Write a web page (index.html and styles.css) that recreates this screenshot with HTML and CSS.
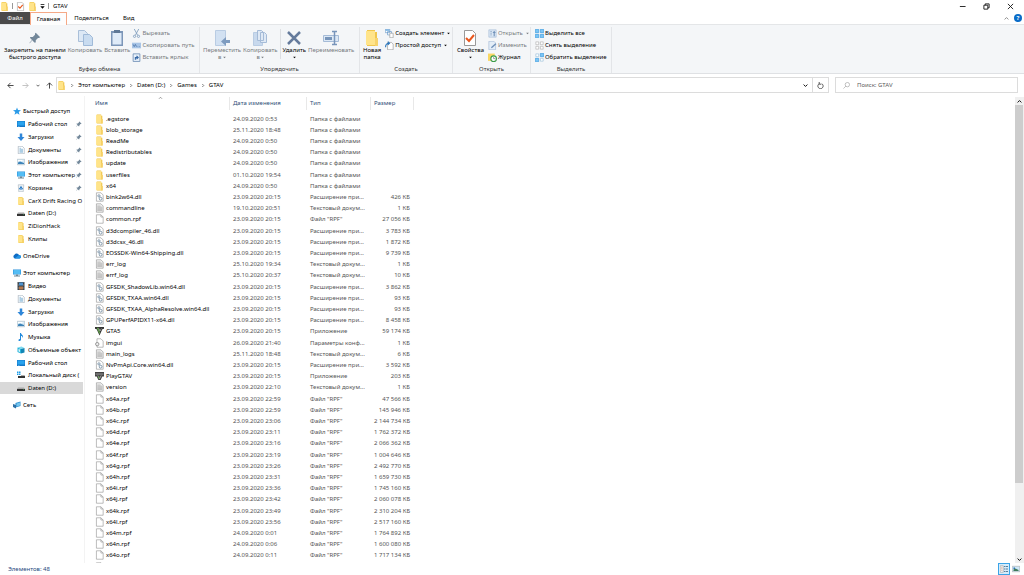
FILE: index.html
```html
<!DOCTYPE html>
<html lang="ru">
<head>
<meta charset="utf-8">
<title>GTAV</title>
<link rel="stylesheet" href="styles.css">
</head>
<body>
<svg class="sprite" aria-hidden="true">
  <symbol id="folder" viewBox="0 0 16 16"><path fill="#f0c64d" d="M3 0h8v2h2v14H3z"/><path fill="#ffe48a" d="M2 1h9v14H2z"/><path fill="#f7d36b" d="M11 8h3v8h-3z"/></symbol>
  <symbol id="file" viewBox="0 0 16 16"><path fill="#fff" stroke="#8a8a8a" d="M2.500.5h8l4 4v11h-12z"/><path fill="none" stroke="#8a8a8a" d="M10.500.5v4h4"/></symbol>
  <symbol id="text" viewBox="0 0 16 16"><path fill="#f1f1f1" stroke="#8a8a8a" d="M2.500.5h8l4 4v11h-12z"/><path stroke="#999" d="M4 4.500h6M4 6.500h9M4 8.500h9M4 10.500h9M4 12.500h9"/></symbol>
  <symbol id="dll" viewBox="0 0 16 16"><path fill="#fff" stroke="#8a8a8a" d="M2.500.5h8l4 4v11h-12z"/><circle cx="7" cy="6" r="2" fill="none" stroke="#6f8aa0" stroke-width="1.500"/><circle cx="10" cy="11" r="2.500" fill="none" stroke="#6f8aa0" stroke-width="1.500"/></symbol>
  <symbol id="config" viewBox="0 0 16 16"><path fill="#fff" stroke="#8a8a8a" d="M3.500.5h7l4 4v11h-11z"/><circle cx="4" cy="10" r="3" fill="#eee" stroke="#888" stroke-width="1.500"/></symbol>
  <symbol id="gta" viewBox="0 0 16 16"><path fill="#333" d="M0 1h16v3l-3 1-5 11L3 5 0 4z"/><path fill="#5f9c4a" d="M3 2h3l3 8-1 4z"/><path stroke="#ddd" d="M7 3l2 5 2-5"/></symbol>
  <symbol id="play" viewBox="0 0 16 16"><path fill="#444" d="M0 1h16v8h-3l-3 6H6L3 9H0z"/><path stroke="#ddd" fill="none" d="M1 4.500h14M5 7l3 6 3-6"/><path fill="#5f9c4a" d="M5 9h3l-1 5z"/></symbol>
  <symbol id="star" viewBox="0 0 16 16"><path fill="#2b9be8" d="M8 1l2 5 6 .3-4.500 3.700L13 15.500 8 12.500 3 15.500 4.500 10 0 6.300 6 6z"/></symbol>
  <symbol id="desktop" viewBox="0 0 16 16"><path fill="#1478c8" d="M0 2h16v12H0z"/><path fill="#29a3ee" d="M1 3h14v8H1z"/><path fill="#8cd3fa" d="M2 12h3v1H2z"/></symbol>
  <symbol id="down" viewBox="0 0 16 16"><path fill="#2e86d8" d="M5.500 1h5v7H15l-7 8-7-8h4.500z"/></symbol>
  <symbol id="docs" viewBox="0 0 16 16"><path fill="#fff" stroke="#8195a5" d="M2.500.5h8l4 4v11h-12z"/><path fill="none" stroke="#4a90c4" d="M5 6.500h7M5 8.500h7M5 10.500h7M5 12.500h7M5 4.500h3"/></symbol>
  <symbol id="images" viewBox="0 0 16 16"><path fill="#d8ecf8" stroke="#9aaab5" d="M.5 2.500h15v11H.5z"/><path fill="#3d83b8" d="M2 9l4-2 8 3v2H2z"/><path fill="#fff" d="M2 4h9v2H2z"/></symbol>
  <symbol id="pc" viewBox="0 0 16 16"><path fill="#2b90d8" d="M0 1h16v10H0z"/><path fill="#54bdf4" d="M1 2h14v8H1z"/><path fill="#6d8796" d="M6 11h4v2h4v2H2v-2h4z"/></symbol>
  <symbol id="bin" viewBox="0 0 16 16"><path fill="#eef3f6" stroke="#98a6b0" d="M2.500 1.500h11l-1 14h-9z"/><path fill="none" stroke="#1b73c4" stroke-width="2" d="M8 5l3 5H5z"/></symbol>
  <symbol id="drive" viewBox="0 0 16 16"><path fill="#aaa" d="M2 7h12l2 3H0z"/><path fill="#333" d="M0 10h16v4H0z"/><path fill="#3db85f" d="M12 11h2v1h-2z"/></symbol>
  <symbol id="sysdrive" viewBox="0 0 16 16"><path fill="#1a9be8" d="M0 1h3v3H0zM4 1h3v3H4zM0 5h3v3H0zM4 5h3v3H4z"/><path fill="#333" d="M2 10h14v4H2z"/><path fill="#aaa" d="M8 8h7l1 2H8z"/></symbol>
  <symbol id="cloud" viewBox="0 0 16 16"><path fill="#0f6cc4" d="M4 13a4 4 0 0 1-1-7.500A5 5 0 0 1 12 6a3.500 3.500 0 0 1 1 7z"/><path fill="#2596e6" d="M3 13l9-7a3.500 3.500 0 0 1 1 7z"/></symbol>
  <symbol id="video" viewBox="0 0 16 16"><path fill="#3b4248" d="M1 0h14v16H1z"/><path fill="#4e93cf" d="M4 1h8v6H4z"/><path fill="#b4764a" d="M4 9h8v6H4z"/><path stroke="#ddd" stroke-dasharray="1 2" d="M2.500 1v14M13.500 1v14"/></symbol>
  <symbol id="music" viewBox="0 0 16 16"><path fill="#2089dc" d="M6 0h2c0 3 5 4 4 9h-1c0-2-1-3-3-3v7c0 4-6 4-5 1 0-2 2-2 3-2z"/></symbol>
  <symbol id="cube" viewBox="0 0 16 16"><path fill="#7ddcf2" d="M1 3l8-2 6 3-7 2z"/><path fill="#27b3da" d="M1 3l7 3v9l-7-3z"/><path fill="#1286b5" d="M8 6l7-2v9l-7 2z"/><path fill="#d8f6fb" d="M3 6l3 1v5l-3-1z"/></symbol>
  <symbol id="network" viewBox="0 0 16 16"><path fill="#2f8fd0" d="M5 4l10-3v9L5 13z"/><path fill="#75c5ee" d="M7 5l7-2v6l-7 2z"/><path fill="#2c6fa5" d="M0 6l6 2v7l-6-3z"/></symbol>
  <symbol id="pin" viewBox="0 0 16 16"><path fill="#73889a" d="M9 1l6 6-2 1-1 0-3 3 0 3-2 0-2.500-3L1 15l-.5-.5L4 10.500 1.500 8l0-1.500 3.500 0 3-3V2z"/></symbol>
  <symbol id="copy" viewBox="0 0 16 16"><path fill="#dce8f5" stroke="#a9bfd9" d="M1.500.5h6l3 3v8h-9z"/><path fill="#c9dcf0" stroke="#a0bad8" d="M6.500 4.500h6l3 3v8h-9z"/></symbol>
  <symbol id="paste" viewBox="0 0 16 16"><path fill="#7c96b8" d="M2 1h12v15H2z"/><path fill="#dfebf8" d="M3.500 3h9v11.500h-9z"/><path fill="#5f7896" d="M5 0h6v3H5z"/></symbol>
  <symbol id="cut" viewBox="0 0 16 16"><path fill="none" stroke="#7f9dbc" stroke-width="1.500" d="M4 0l6 11M12 0L6 11"/><circle cx="4.500" cy="13" r="2" fill="none" stroke="#7f9dbc" stroke-width="1.500"/><circle cx="11.500" cy="13" r="2" fill="none" stroke="#7f9dbc" stroke-width="1.500"/></symbol>
  <symbol id="path" viewBox="0 0 16 16"><path fill="#a9c5e6" d="M0 3h16v10H0z"/><path stroke="#4f79ac" stroke-width="1.500" fill="none" d="M2 6l2 4 2-4 2 4M10 10h1M13 10h1"/></symbol>
  <symbol id="shortcut" viewBox="0 0 16 16"><path fill="#e8f1fa" stroke="#6f90b5" stroke-width="1.500" d="M2 1.500h12v13.500H2z"/><path fill="none" stroke="#3568a5" stroke-width="2" d="M6 12V8h4M8 5l3 3-3 3"/></symbol>
  <symbol id="move" viewBox="0 0 16 16"><path fill="#d2e1f2" stroke="#b9cce3" d="M1.500.5h10v15h-10z"/><path fill="#7f9cc0" d="M16 10v3h-4v3l-5-4.500L12 7v3z"/></symbol>
  <symbol id="copyto" viewBox="0 0 16 16"><path fill="#c8d9ed" stroke="#b9cce3" d="M1.500 2.500h9v13h-9z"/><path fill="#dfe9f5" stroke="#a5bbd7" d="M5.500.5h4l2 2v8h-6zM8.500 2.500h4l2 2v8h-6z"/></symbol>
  <symbol id="delete" viewBox="0 0 16 16"><path stroke="#657b9c" stroke-width="2.500" d="M2 2l12 12M14 2L2 14"/></symbol>
  <symbol id="rename" viewBox="0 0 16 16"><path fill="#dce8f5" stroke="#a5bbd7" d="M.5 5.500h15v6H.5z"/><path fill="#7895ba" d="M2 7h7v3H2z"/><path fill="none" stroke="#7895ba" stroke-width="1.500" d="M9 1.500h5M11.500 1.500v13M9 14.500h5"/></symbol>
  <symbol id="newitem" viewBox="0 0 16 16"><path fill="#fff" stroke="#4e88be" d="M.5.5h8v6h-8zM4.500 4.500h7v6h-7z"/><path fill="#fff" stroke="#888" d="M8.500 7.500h6v8h-6z"/><path fill="#5da4dc" d="M1 1h7v2H1z"/></symbol>
  <symbol id="easy" viewBox="0 0 16 16"><path fill="#fff" stroke="#888" d="M4.500 2.500h7l3 3v10h-10z"/><path fill="none" stroke="#2c77bd" stroke-width="2" d="M1 11c0-5 2-7 6-7M5 1l3 3-3 3"/></symbol>
  <symbol id="props" viewBox="0 0 16 16"><path fill="#fff" stroke="#999" d="M2.500.5h8l3 3v12h-11z"/><path fill="none" stroke="#e8571e" stroke-width="2" d="M4 8l3 3 5-6"/></symbol>
  <symbol id="open" viewBox="0 0 16 16"><path fill="#dce8f5" stroke="#98b1d0" d="M1.500 1.500h13v13h-13z"/><path stroke="#6f90b8" d="M4 4.500h3M4 7.500h3M4 10.500h3"/><path fill="#6f90b8" d="M11 3l3 4h-2v6h-2V7H8z"/></symbol>
  <symbol id="edit" viewBox="0 0 16 16"><path fill="#e4eef8" stroke="#98b1d0" d="M1.500.5h9l3 3v12h-12z"/><path stroke="#6f90b8" stroke-width="2.500" d="M6 12l8-7"/></symbol>
  <symbol id="history" viewBox="0 0 16 16"><path fill="#f8d763" d="M0 1h12v13H0z"/><circle cx="10" cy="10" r="5" fill="#fff" stroke="#3b9b4a" stroke-width="2"/><path fill="none" stroke="#555" d="M10 7v3h3"/></symbol>
  <symbol id="selall" viewBox="0 0 16 16"><path fill="#7cc5f4" stroke="#2c92dc" d="M.5.5h6v6h-6zM9.500.5h6v6h-6zM.5 9.500h6v6h-6zM9.500 9.500h6v6h-6z"/></symbol>
  <symbol id="selnone" viewBox="0 0 16 16"><path fill="#fff" stroke="#a5a5a5" d="M1.500 1.500h5v5h-5zM9.500 1.500h5v5h-5zM1.500 9.500h5v5h-5zM9.500 9.500h5v5h-5z"/></symbol>
  <symbol id="selinv" viewBox="0 0 16 16"><path fill="#7cc5f4" stroke="#2c92dc" d="M9.500.5h6v6h-6zM.5 9.500h6v6h-6z"/><path fill="#fff" stroke="#8ab5d5" d="M1.500 1.500h5v5h-5zM9.500 9.500h5v5h-5z"/></symbol>
  <symbol id="left" viewBox="0 0 16 16"><path fill="none" stroke="currentColor" stroke-width="2" d="M15 8H2M8 2L2 8l6 6"/></symbol>
  <symbol id="right" viewBox="0 0 16 16"><path fill="none" stroke="currentColor" stroke-width="2" d="M1 8h13M8 2l6 6-6 6"/></symbol>
  <symbol id="up" viewBox="0 0 16 16"><path fill="none" stroke="currentColor" stroke-width="2" d="M8 15V2M2 8l6-6 6 6"/></symbol>
  <symbol id="chev" viewBox="0 0 16 16"><path fill="none" stroke="currentColor" stroke-width="3" d="M2 5l6 6 6-6"/></symbol>
  <symbol id="chevup" viewBox="0 0 16 16"><path fill="none" stroke="currentColor" stroke-width="3" d="M2 11l6-6 6 6"/></symbol>
  <symbol id="sep" viewBox="0 0 16 16"><path fill="none" stroke="currentColor" stroke-width="3" d="M5 2l6 6-6 6"/></symbol>
  <symbol id="tri" viewBox="0 0 16 16"><path fill="currentColor" d="M1 4h14l-7 8z"/></symbol>
</svg>

<header class="titlebar">
  <svg class="icon"><use href="#folder"/></svg>
  <span class="bar"></span>
  <button class="plain" aria-label="Свойства"><svg class="icon"><use href="#props"/></svg></button>
  <button class="plain" aria-label="Новая папка"><svg class="icon"><use href="#folder"/></svg></button>
  <button class="plain" aria-label="Настройка панели"><svg class="micro" viewBox="0 0 16 16"><path d="M2 1h12v2H2zM1 7h14l-7 8z"/></svg></button>
  <span class="bar"></span>
  <h1>GTAV</h1>
  <div class="window-buttons">
    <button class="plain" aria-label="Свернуть"><svg viewBox="0 0 16 16"><path d="M2 8h13" /></svg></button>
    <button class="plain" aria-label="Восстановить"><svg viewBox="0 0 16 16"><path d="M2 5h9v9H2zM5 5V2h9v9h-3"/></svg></button>
    <button class="plain" aria-label="Закрыть"><svg viewBox="0 0 16 16"><path d="M2 2l12 12M14 2L2 14"/></svg></button>
  </div>
</header>

<nav class="tabs">
  <button class="tab tab-file">Файл</button>
  <button class="tab tab-active">Главная</button>
  <button class="tab tab-share">Поделиться</button>
  <button class="tab">Вид</button>
  <div class="tabs-end">
    <button class="plain" aria-label="Свернуть ленту"><svg class="micro"><use href="#chevup"/></svg></button>
    <button class="help" aria-label="Справка">?</button>
  </div>
</nav>

<section class="ribbon">
  <div class="group group-clipboard">
    <div class="tools">
      <button class="big"><svg class="pin-large"><use href="#pin"/></svg><span>Закрепить на панели<br>быстрого доступа</span></button>
      <button class="big off"><svg><use href="#copy"/></svg><span>Копировать</span></button>
      <button class="big off"><svg><use href="#paste"/></svg><span>Вставить</span></button>
      <div class="stack">
        <button class="small off"><svg><use href="#cut"/></svg>Вырезать</button>
        <button class="small off"><svg><use href="#path"/></svg>Скопировать путь</button>
        <button class="small off"><svg><use href="#shortcut"/></svg>Вставить ярлык</button>
      </div>
    </div>
    <h2>Буфер обмена</h2>
  </div>
  <div class="group group-organize">
    <div class="tools">
      <button class="big off"><svg><use href="#move"/></svg><span>Переместить<br>в <svg class="drop"><use href="#tri"/></svg></span></button>
      <button class="big off"><svg><use href="#copyto"/></svg><span>Копировать<br>в <svg class="drop"><use href="#tri"/></svg></span></button>
      <span class="divider"></span>
      <button class="big"><svg><use href="#delete"/></svg><span>Удалить<br><svg class="drop"><use href="#tri"/></svg></span></button>
      <button class="big off"><svg><use href="#rename"/></svg><span>Переименовать</span></button>
    </div>
    <h2>Упорядочить</h2>
  </div>
  <div class="group group-new">
    <div class="tools">
      <button class="big"><svg><use href="#folder"/></svg><span>Новая<br>папка</span></button>
      <div class="stack">
        <button class="small"><svg><use href="#newitem"/></svg>Создать элемент <svg class="drop"><use href="#tri"/></svg></button>
        <button class="small"><svg><use href="#easy"/></svg>Простой доступ <svg class="drop"><use href="#tri"/></svg></button>
      </div>
    </div>
    <h2>Создать</h2>
  </div>
  <div class="group group-open">
    <div class="tools">
      <button class="big"><svg><use href="#props"/></svg><span>Свойства<br><svg class="drop"><use href="#tri"/></svg></span></button>
      <div class="stack">
        <button class="small off"><svg><use href="#open"/></svg>Открыть <svg class="drop"><use href="#tri"/></svg></button>
        <button class="small off"><svg><use href="#edit"/></svg>Изменить</button>
        <button class="small"><svg><use href="#history"/></svg>Журнал</button>
      </div>
    </div>
    <h2>Открыть</h2>
  </div>
  <div class="group group-select">
    <div class="tools">
      <div class="stack">
        <button class="small"><svg><use href="#selall"/></svg>Выделить все</button>
        <button class="small"><svg><use href="#selnone"/></svg>Снять выделение</button>
        <button class="small"><svg><use href="#selinv"/></svg>Обратить выделение</button>
      </div>
    </div>
    <h2>Выделить</h2>
  </div>
</section>

<section class="location">
  <div class="history">
    <button class="plain" aria-label="Назад"><svg><use href="#left"/></svg></button>
    <button class="plain faint" aria-label="Вперед"><svg><use href="#right"/></svg></button>
    <button class="plain" aria-label="Последние расположения"><svg class="micro"><use href="#chev"/></svg></button>
    <button class="plain" aria-label="Вверх"><svg><use href="#up"/></svg></button>
  </div>
  <div class="address">
    <svg class="icon"><use href="#folder"/></svg>
    <svg class="micro"><use href="#sep"/></svg>
    <a href="#">Этот компьютер</a>
    <svg class="micro"><use href="#sep"/></svg>
    <a href="#">Daten (D:)</a>
    <svg class="micro"><use href="#sep"/></svg>
    <a href="#">Games</a>
    <svg class="micro"><use href="#sep"/></svg>
    <a href="#">GTAV</a>
    <button class="plain address-drop" aria-label="Предыдущие расположения"><svg class="micro"><use href="#chev"/></svg></button>
    <button class="refresh" aria-label="Обновить"><svg viewBox="0 0 16 16"><path d="M11 4a6 6 0 1 1-6 0M5 0v5h5"/></svg></button>
  </div>
  <label class="search">
    <svg viewBox="0 0 16 16"><circle cx="10" cy="6" r="5"/><path d="M6.500 9.500L1 15"/></svg>
    <input type="search" placeholder="Поиск: GTAV" aria-label="Поиск: GTAV">
  </label>
</section>

<main class="main">
  <nav class="side">
    <ul>
      <li><a href="#" class="root"><svg><use href="#star"/></svg><span>Быстрый доступ</span></a></li>
      <li><a href="#"><svg><use href="#desktop"/></svg><span>Рабочий стол</span><svg class="pinned"><use href="#pin"/></svg></a></li>
      <li><a href="#"><svg><use href="#down"/></svg><span>Загрузки</span><svg class="pinned"><use href="#pin"/></svg></a></li>
      <li><a href="#"><svg><use href="#docs"/></svg><span>Документы</span><svg class="pinned"><use href="#pin"/></svg></a></li>
      <li><a href="#"><svg><use href="#images"/></svg><span>Изображения</span><svg class="pinned"><use href="#pin"/></svg></a></li>
      <li><a href="#"><svg><use href="#pc"/></svg><span>Этот компьютер</span><svg class="pinned"><use href="#pin"/></svg></a></li>
      <li><a href="#"><svg><use href="#bin"/></svg><span>Корзина</span><svg class="pinned"><use href="#pin"/></svg></a></li>
      <li><a href="#"><svg><use href="#folder"/></svg><span>CarX Drift Racing O</span></a></li>
      <li><a href="#"><svg><use href="#drive"/></svg><span>Daten (D:)</span></a></li>
      <li><a href="#"><svg><use href="#folder"/></svg><span>ZiDionHack</span></a></li>
      <li><a href="#"><svg><use href="#folder"/></svg><span>Клипы</span></a></li>
    </ul>
    <ul>
      <li><a href="#" class="root"><svg><use href="#cloud"/></svg><span>OneDrive</span></a></li>
    </ul>
    <ul>
      <li><a href="#" class="root"><svg><use href="#pc"/></svg><span>Этот компьютер</span></a></li>
      <li><a href="#"><svg><use href="#video"/></svg><span>Видео</span></a></li>
      <li><a href="#"><svg><use href="#docs"/></svg><span>Документы</span></a></li>
      <li><a href="#"><svg><use href="#down"/></svg><span>Загрузки</span></a></li>
      <li><a href="#"><svg><use href="#images"/></svg><span>Изображения</span></a></li>
      <li><a href="#"><svg><use href="#music"/></svg><span>Музыка</span></a></li>
      <li><a href="#"><svg><use href="#cube"/></svg><span>Объемные объект</span></a></li>
      <li><a href="#"><svg><use href="#desktop"/></svg><span>Рабочий стол</span></a></li>
      <li><a href="#"><svg><use href="#sysdrive"/></svg><span>Локальный диск (</span></a></li>
      <li><a href="#" class="current"><svg><use href="#drive"/></svg><span>Daten (D:)</span></a></li>
    </ul>
    <ul>
      <li><a href="#" class="root"><svg><use href="#network"/></svg><span>Сеть</span></a></li>
    </ul>
  </nav>

  <div class="files">
    <table>
      <colgroup><col class="col-name"><col class="col-date"><col class="col-type"><col class="col-size"></colgroup>
      <thead><tr><th>Имя<svg class="sort"><use href="#chevup"/></svg></th><th>Дата изменения</th><th>Тип</th><th>Размер</th></tr></thead>
      <tbody>
        <tr><td><svg><use href="#folder"/></svg>.egstore</td><td>24.09.2020 0:53</td><td>Папка с файлами</td><td></td></tr>
        <tr><td><svg><use href="#folder"/></svg>blob_storage</td><td>25.11.2020 18:48</td><td>Папка с файлами</td><td></td></tr>
        <tr><td><svg><use href="#folder"/></svg>ReadMe</td><td>24.09.2020 0:50</td><td>Папка с файлами</td><td></td></tr>
        <tr><td><svg><use href="#folder"/></svg>Redistributables</td><td>24.09.2020 0:50</td><td>Папка с файлами</td><td></td></tr>
        <tr><td><svg><use href="#folder"/></svg>update</td><td>24.09.2020 0:50</td><td>Папка с файлами</td><td></td></tr>
        <tr><td><svg><use href="#folder"/></svg>userfiles</td><td>01.10.2020 19:54</td><td>Папка с файлами</td><td></td></tr>
        <tr><td><svg><use href="#folder"/></svg>x64</td><td>24.09.2020 0:50</td><td>Папка с файлами</td><td></td></tr>
        <tr><td><svg><use href="#dll"/></svg>bink2w64.dll</td><td>23.09.2020 20:15</td><td>Расширение при...</td><td>426 КБ</td></tr>
        <tr><td><svg><use href="#text"/></svg>commandline</td><td>19.10.2020 20:51</td><td>Текстовый докум...</td><td>1 КБ</td></tr>
        <tr><td><svg><use href="#file"/></svg>common.rpf</td><td>23.09.2020 20:15</td><td>Файл "RPF"</td><td>27 056 КБ</td></tr>
        <tr><td><svg><use href="#dll"/></svg>d3dcompiler_46.dll</td><td>23.09.2020 20:15</td><td>Расширение при...</td><td>3 783 КБ</td></tr>
        <tr><td><svg><use href="#dll"/></svg>d3dcsx_46.dll</td><td>23.09.2020 20:15</td><td>Расширение при...</td><td>1 872 КБ</td></tr>
        <tr><td><svg><use href="#dll"/></svg>EOSSDK-Win64-Shipping.dll</td><td>23.09.2020 20:15</td><td>Расширение при...</td><td>9 739 КБ</td></tr>
        <tr><td><svg><use href="#text"/></svg>err_log</td><td>25.10.2020 19:34</td><td>Текстовый докум...</td><td>1 КБ</td></tr>
        <tr><td><svg><use href="#text"/></svg>errf_log</td><td>25.10.2020 20:37</td><td>Текстовый докум...</td><td>10 КБ</td></tr>
        <tr><td><svg><use href="#dll"/></svg>GFSDK_ShadowLib.win64.dll</td><td>23.09.2020 20:15</td><td>Расширение при...</td><td>3 862 КБ</td></tr>
        <tr><td><svg><use href="#dll"/></svg>GFSDK_TXAA.win64.dll</td><td>23.09.2020 20:15</td><td>Расширение при...</td><td>93 КБ</td></tr>
        <tr><td><svg><use href="#dll"/></svg>GFSDK_TXAA_AlphaResolve.win64.dll</td><td>23.09.2020 20:15</td><td>Расширение при...</td><td>93 КБ</td></tr>
        <tr><td><svg><use href="#dll"/></svg>GPUPerfAPIDX11-x64.dll</td><td>23.09.2020 20:15</td><td>Расширение при...</td><td>8 458 КБ</td></tr>
        <tr><td><svg><use href="#gta"/></svg>GTA5</td><td>23.09.2020 20:15</td><td>Приложение</td><td>59 174 КБ</td></tr>
        <tr><td><svg><use href="#config"/></svg>imgui</td><td>26.09.2020 21:40</td><td>Параметры конф...</td><td>1 КБ</td></tr>
        <tr><td><svg><use href="#text"/></svg>main_logs</td><td>25.11.2020 18:48</td><td>Текстовый докум...</td><td>6 КБ</td></tr>
        <tr><td><svg><use href="#dll"/></svg>NvPmApi.Core.win64.dll</td><td>23.09.2020 20:15</td><td>Расширение при...</td><td>3 592 КБ</td></tr>
        <tr><td><svg><use href="#play"/></svg>PlayGTAV</td><td>23.09.2020 20:15</td><td>Приложение</td><td>203 КБ</td></tr>
        <tr><td><svg><use href="#text"/></svg>version</td><td>23.09.2020 22:10</td><td>Текстовый докум...</td><td>1 КБ</td></tr>
        <tr><td><svg><use href="#file"/></svg>x64a.rpf</td><td>23.09.2020 22:59</td><td>Файл "RPF"</td><td>47 566 КБ</td></tr>
        <tr><td><svg><use href="#file"/></svg>x64b.rpf</td><td>23.09.2020 22:59</td><td>Файл "RPF"</td><td>145 946 КБ</td></tr>
        <tr><td><svg><use href="#file"/></svg>x64c.rpf</td><td>23.09.2020 23:06</td><td>Файл "RPF"</td><td>2 144 734 КБ</td></tr>
        <tr><td><svg><use href="#file"/></svg>x64d.rpf</td><td>23.09.2020 23:11</td><td>Файл "RPF"</td><td>1 762 372 КБ</td></tr>
        <tr><td><svg><use href="#file"/></svg>x64e.rpf</td><td>23.09.2020 23:16</td><td>Файл "RPF"</td><td>2 066 362 КБ</td></tr>
        <tr><td><svg><use href="#file"/></svg>x64f.rpf</td><td>23.09.2020 23:19</td><td>Файл "RPF"</td><td>1 004 646 КБ</td></tr>
        <tr><td><svg><use href="#file"/></svg>x64g.rpf</td><td>23.09.2020 23:26</td><td>Файл "RPF"</td><td>2 492 770 КБ</td></tr>
        <tr><td><svg><use href="#file"/></svg>x64h.rpf</td><td>23.09.2020 23:31</td><td>Файл "RPF"</td><td>1 659 730 КБ</td></tr>
        <tr><td><svg><use href="#file"/></svg>x64i.rpf</td><td>23.09.2020 23:36</td><td>Файл "RPF"</td><td>1 745 160 КБ</td></tr>
        <tr><td><svg><use href="#file"/></svg>x64j.rpf</td><td>23.09.2020 23:42</td><td>Файл "RPF"</td><td>2 060 078 КБ</td></tr>
        <tr><td><svg><use href="#file"/></svg>x64k.rpf</td><td>23.09.2020 23:49</td><td>Файл "RPF"</td><td>2 310 204 КБ</td></tr>
        <tr><td><svg><use href="#file"/></svg>x64l.rpf</td><td>23.09.2020 23:56</td><td>Файл "RPF"</td><td>2 517 160 КБ</td></tr>
        <tr><td><svg><use href="#file"/></svg>x64m.rpf</td><td>24.09.2020 0:01</td><td>Файл "RPF"</td><td>1 764 892 КБ</td></tr>
        <tr><td><svg><use href="#file"/></svg>x64n.rpf</td><td>24.09.2020 0:06</td><td>Файл "RPF"</td><td>1 600 080 КБ</td></tr>
        <tr><td><svg><use href="#file"/></svg>x64o.rpf</td><td>24.09.2020 0:11</td><td>Файл "RPF"</td><td>1 717 134 КБ</td></tr>
        <tr><td><svg><use href="#file"/></svg></td><td></td><td></td><td></td></tr>
      </tbody>
    </table>
  </div>

  <div class="scrollbar">
    <button class="plain" aria-label="Прокрутить вверх"><svg class="micro"><use href="#chevup"/></svg></button>
    <div class="thumb"></div>
    <div class="track"></div>
    <button class="plain" aria-label="Прокрутить вниз"><svg class="micro"><use href="#chev"/></svg></button>
  </div>
</main>

<footer class="status">
  <span class="count">Элементов: 48</span>
  <button class="view view-active" aria-label="Таблица"><svg viewBox="0 0 16 16"><path fill="#fff" stroke="#8c8c8c" d="M.5 1.500h6v13h-6z"/><path stroke="#c07a5a" d="M2 4.500h3M2 7.500h3M2 10.500h3"/><path stroke="#5a7f9c" stroke-width="2" d="M8 3h3M12 3h4M8 8h3M12 8h4M8 13h3M12 13h4"/></svg></button>
  <button class="view" aria-label="Крупные значки"><svg viewBox="0 0 16 16"><path fill="#cfe8f8" stroke="#999" d="M.5 2.500h15v11H.5z"/><path fill="#3f7a5a" d="M3 9l4-2 6 3v2H3z"/><path fill="#2b6fb0" d="M3 5h3v3H3z"/></svg></button>
</footer>
</body>
</html>
```
FILE: styles.css
```css
* { box-sizing: border-box; }

body {
  display: flex;
  flex-direction: column;
  height: 100vh;
  margin: 0;
  overflow: hidden;
  background: #fff;
  color: #000;
  font: 6px/8px "Noto Sans", "Open Sans", sans-serif;
}

h1, h2, ul { margin: 0; padding: 0; font: inherit; list-style: none; }
a { color: inherit; text-decoration: none; }
button, input { font: inherit; color: inherit; }
button { margin: 0; padding: 0; border: 0; background: none; }
svg { flex: none; display: block; }
.sprite { position: absolute; width: 0; height: 0; }
.plain { display: flex; align-items: center; justify-content: center; }
.icon { width: 9px; height: 9px; }
.micro { width: 5px; height: 5px; }

/* title bar */
.titlebar {
  display: flex;
  flex: none;
  align-items: center;
  gap: 3px;
  height: 12px;
}
.titlebar h1 { padding-left: 1px; }
.bar { width: 1px; height: 6px; background: #999; }
.window-buttons { display: flex; gap: 17px; margin-left: auto; padding-right: 10px; }
.window-buttons svg {
  width: 7px;
  height: 7px;
  fill: none;
  stroke: #111;
  stroke-width: 2;
}

/* tabs */
.tabs { display: flex; flex: none; height: 13px; border-bottom: 1px solid #e4e6e8; }
.tab { padding: 0 7px; line-height: 12px; }
.tab-file { width: 30px; padding: 0; background: #4a4a4a; color: #fff; }
.tab-active {
  width: 37px;
  height: 13px;
  padding: 0;
  border: 1px solid #f5a987;
  border-bottom: 0;
  background: #fdfdfd;
}
.tab-share { width: 49px; padding: 0; }
.tabs-end { display: flex; align-items: center; gap: 5px; margin-left: auto; padding-right: 2px; color: #888; }
.help {
  width: 8px;
  height: 8px;
  border-radius: 50%;
  background: #0a6cc8;
  color: #fff;
  font-weight: bold;
}

/* ribbon */
.ribbon {
  display: flex;
  flex: none;
  padding: 2px 0 0;
  border-bottom: 1px solid #dfe1e4;
  background: #f4f6f8;
}
.group {
  display: flex;
  flex-direction: column;
  gap: 2px;
  padding: 0 4px;
  border-right: 1px solid #e3e5e8;
}
.group h2 { color: #333; text-align: center; }
.group-clipboard { width: 200px; }
.group-organize { width: 160px; padding: 0 3px; }
.group-new { width: 93px; padding: 0 3px; }
.group-open { width: 78px; }
.group-select { width: 81px; }
.tools { display: flex; gap: 2px; height: 36px; }
.group-new .tools, .group-open .tools { gap: 4px; }
.big {
  display: flex;
  flex-direction: column;
  align-items: center;
  gap: 1px;
  padding-top: 3px;
  line-height: 7px;
  white-space: nowrap;
}
.big > svg { width: 16px; height: 16px; }
.big > .pin-large { width: 12px; }
.drop { display: inline-block; width: 3px; height: 3px; vertical-align: middle; }
.stack { display: flex; flex-direction: column; }
.small { display: flex; align-items: center; gap: 1px; height: 12px; white-space: nowrap; }
.small > svg { width: 9px; height: 9px; }
.small > .drop { width: 3px; height: 3px; margin-left: 2px; }
.off { color: #777b80; }
.divider { width: 1px; height: 30px; margin-top: 2px; background: #dddfe2; }

/* address row */
.location { display: flex; flex: none; gap: 3px; padding: 3px 6px 3px 0; }
.history { display: flex; align-items: center; justify-content: space-between; width: 53px; padding: 0 0 0 7px; color: #333; }
.history svg { width: 7px; height: 7px; }
.history .micro { width: 4px; }
.history .faint { margin-left: 2px; color: #bbb; }
.address {
  display: flex;
  flex: 1;
  align-items: center;
  gap: 4px;
  height: 16px;
  border: 1px solid #dcdcdc;
}
.address > .micro { width: 4px; color: #555; }
.address-drop { margin-left: auto; }
.refresh { display: flex; align-items: center; justify-content: center; width: 16px; height: 14px; border-left: 1px solid #dcdcdc; }
.refresh svg { width: 7px; height: 7px; fill: none; stroke: #444; stroke-width: 2; }
.search {
  display: flex;
  align-items: center;
  gap: 7px;
  width: 183px;
  height: 16px;
  margin-left: 3px;
  padding: 0 7px;
  border: 1px solid #dcdcdc;
}
.search svg { width: 7px; height: 7px; fill: none; stroke: #777; stroke-width: 1px; }
.search input { flex: 1; min-width: 0; padding: 0; border: 0; outline: 0; background: none; }
.search input::placeholder { color: #5d5d5d; opacity: 1; }

/* content */
.main { display: flex; flex: 1; min-height: 0; }
.side { width: 85px; padding: 9px 1px 0 0; overflow: hidden; border-right: 1px solid #f3f3f3; }
.side ul + ul { margin-top: 4px; }
.side li { height: 13px; }
.side li:nth-child(4n) { height: 12px; }
.side a { display: flex; align-items: center; gap: 3px; height: 12px; padding-left: 17px; }
.side .root { gap: 2px; padding-left: 13px; }
.side svg { width: 8px; height: 8px; }
.side span { flex: 1; min-width: 0; white-space: nowrap; }
.side .pinned { width: 6px; height: 6px; margin-right: 1px; }
.side a:has(.pinned) { gap: 1px; }
.side a:has(.pinned) span { padding-left: 2px; }
.side .current { background: #d9d9d9; }

.files { flex: 1; overflow: hidden; }
table { width: 329px; border-collapse: collapse; table-layout: fixed; }
.col-name { width: 145px; }
.col-date { width: 77px; }
.col-type { width: 64px; }
.col-size { width: 43px; }
th {
  position: relative;
  height: 17px;
  padding: 0 0 3px 3px;
  background: linear-gradient(#e8e8e8, #e8e8e8) right 0 top 1px / 1px 13px no-repeat;
  color: #2f4f78;
  font-weight: normal;
  text-align: left;
}
.sort { position: absolute; top: 0; left: 73px; width: 5px; height: 4px; color: #777; }
td {
  height: 11px;
  padding: 0 0 0 3px;
  overflow: hidden;
  color: #555;
  line-height: 10px;
  white-space: nowrap;
}
tr:nth-child(5n) td { height: 12px; }
th:first-child, td:first-child { padding-left: 10px; }
td:first-child { color: #000; }
td:last-child { padding-right: 4px; text-align: right; }
td svg { float: left; width: 9px; height: 10px; margin-right: 2px; }

.scrollbar { display: flex; flex-direction: column; width: 9px; margin-top: 1px; background: #f0f0f0; }
.scrollbar button { flex: none; height: 8px; width: 100%; }
.thumb { flex: 378; margin: 0 1px 0 0; background: #cdcdcd; }
.track { flex: 72; }

.status { display: flex; flex: none; align-items: center; height: 12px; padding: 0 2px 0 8px; color: #1f4a80; }
.count { flex: 1; }
.view { display: flex; align-items: center; justify-content: center; width: 12px; height: 12px; }
.view svg { width: 8px; height: 8px; }
.view-active { border: 1px solid #3ba4e8; background: #d6ecfa; }
```
